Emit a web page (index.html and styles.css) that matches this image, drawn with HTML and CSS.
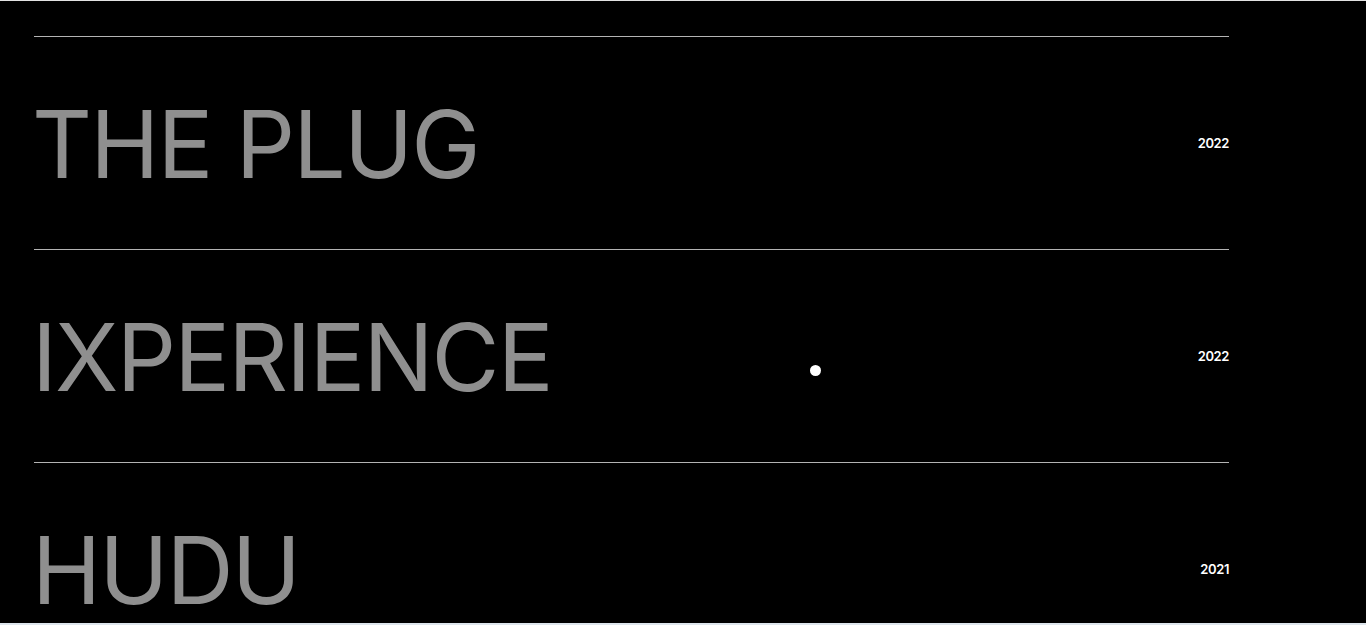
FILE: index.html
```html
<!DOCTYPE html>
<html lang="en">
<head>
<meta charset="utf-8">
<title>Projects</title>
<link rel="stylesheet" href="styles.css">
</head>
<body>
<main class="page">
  <ul class="projects">
    <li class="project">
      <span class="project-title">THE PLUG</span>
      <span class="project-year">2022</span>
    </li>
    <li class="project">
      <span class="project-title">IXPERIENCE</span>
      <span class="project-year">2022</span>
    </li>
    <li class="project">
      <span class="project-title">HUDU</span>
      <span class="project-year">2021</span>
    </li>
  </ul>
  <div class="cursor-dot"></div>
</main>
</body>
</html>
```
FILE: styles.css
```css
html, body {
  margin: 0;
  padding: 0;
  background: #000;
}
body {
  height: 625px;
  overflow: hidden;
  box-sizing: border-box;
  border-top: 1px solid #e2e2e2;
  border-bottom: 2px solid #dde5ec;
  font-family: Inter, "Noto Sans", sans-serif;
}
.page {
  position: relative;
  box-sizing: border-box;
  height: 100%;
  overflow: hidden;
  padding: 35px 137px 0 34px;
}
.projects {
  list-style: none;
  margin: 0;
  padding: 0;
}
.project {
  display: flex;
  justify-content: space-between;
  align-items: center;
  height: 212px;
  border-top: 1px solid #b3b3b3;
}
.project-title {
  color: #8f8f8f;
  font-size: 93px;
  font-weight: 400;
  letter-spacing: -0.02em;
  line-height: 1;
  margin-top: 3px;
  margin-left: -2px;
}
.project-year {
  color: #fff;
  font-size: 13px;
  font-weight: 600;
  letter-spacing: -0.03em;
}
.cursor-dot {
  position: absolute;
  left: 810px;
  top: 364px;
  width: 11px;
  height: 11px;
  border-radius: 50%;
  background: #fff;
}
```
